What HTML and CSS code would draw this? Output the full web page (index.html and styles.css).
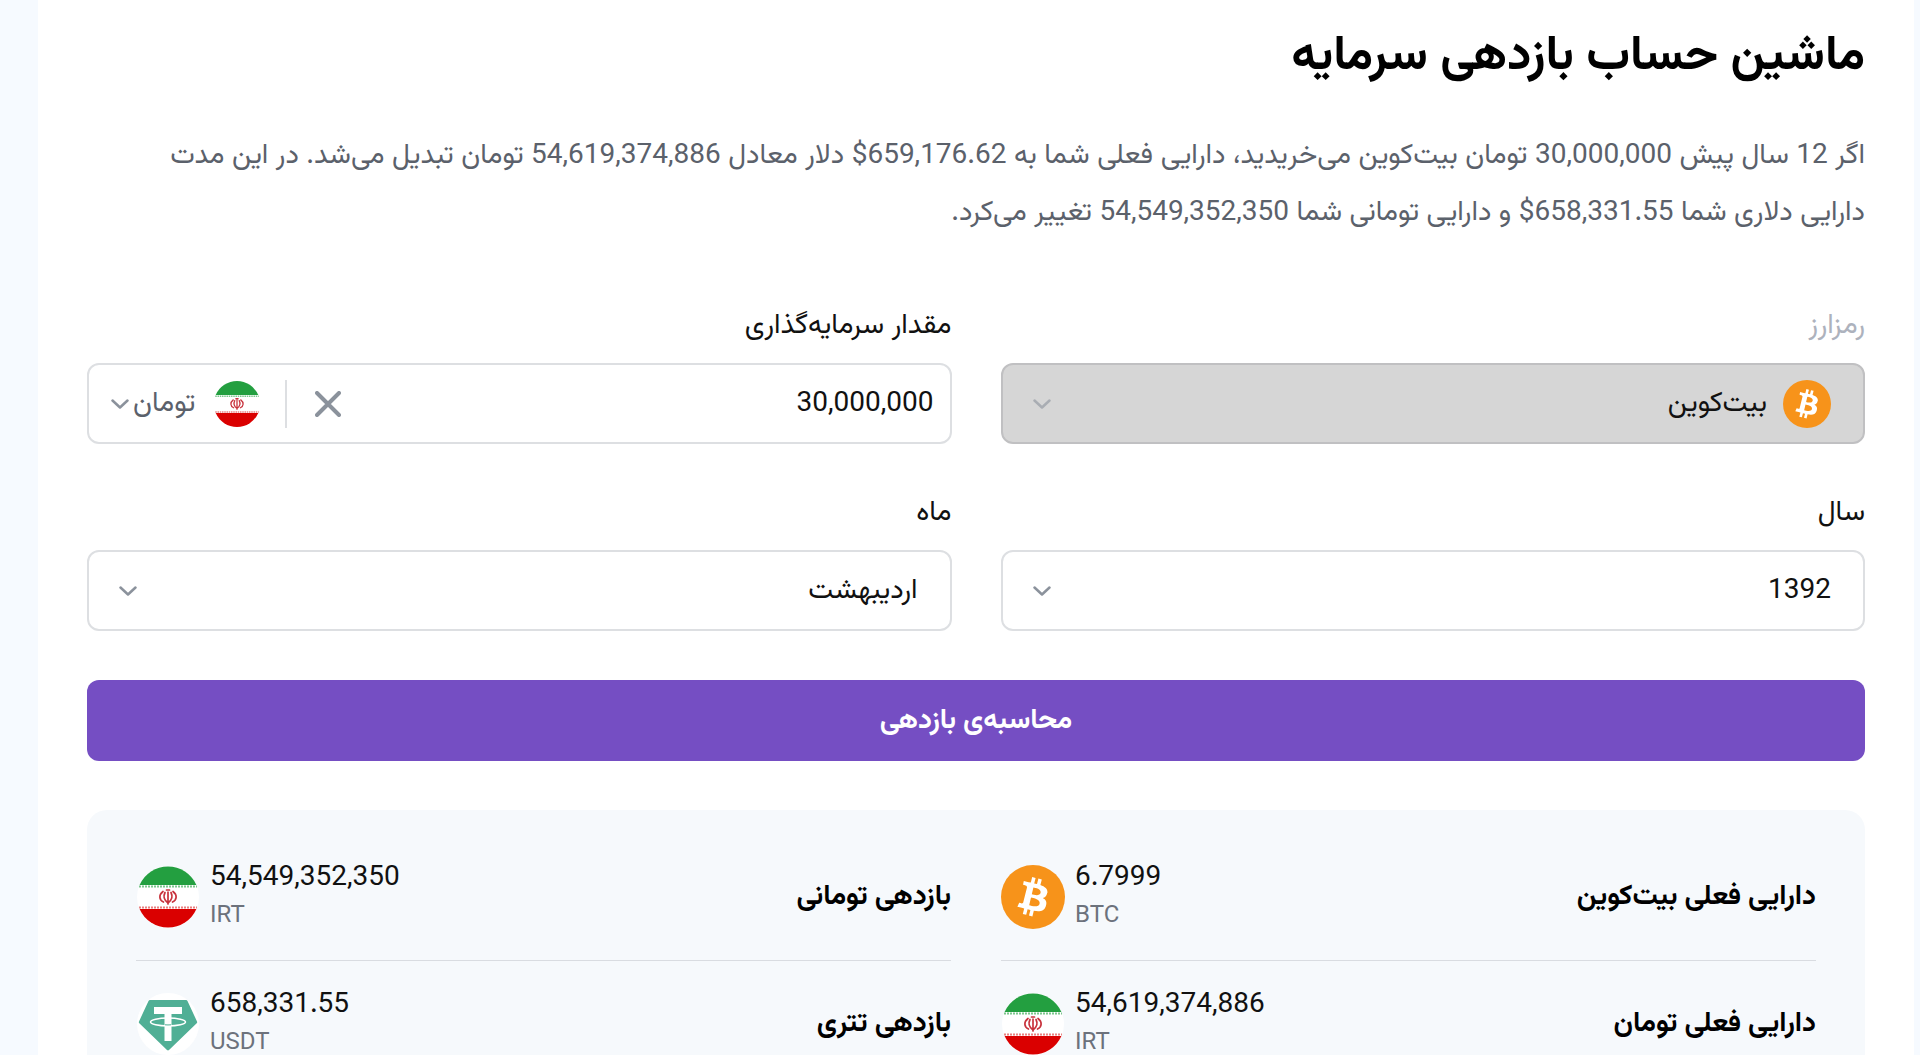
FILE: index.html
```html
<!DOCTYPE html>
<html lang="fa" dir="rtl">
<head>
<meta charset="utf-8">
<meta name="viewport" content="width=device-width, initial-scale=1">
<title>ماشین حساب بازدهی سرمایه</title>
<link rel="stylesheet" href="styles.css">
</head>
<body>
<svg class="sprite" aria-hidden="true">
  <symbol id="btc" viewBox="0 0 32 32">
    <circle cx="16" cy="16" r="16" fill="#f7931a"/>
    <path fill="#fff" d="M23.2 14c.3-2.100-1.300-3.200-3.500-4l.7-2.800-1.700-.4-.7 2.700-1.400-.3.7-2.700-1.700-.5-.7 2.800-1.100-.2-2.400-.6-.4 1.900s1.200.3 1.200.3c.7.2.8.6.8 1l-.8 3.200-1.100 4.400c-.1.200-.3.500-.8.400 0 0-1.200-.3-1.200-.3l-.9 2 2.200.5 1.200.3-.7 2.800 1.700.4.7-2.800 1.400.4-.7 2.700 1.700.5.7-2.800c2.900.5 5.100.3 6-2.300.8-2.100 0-3.300-1.500-4.100 1.100-.3 1.900-1 2.200-2.500zm-3.900 5.400c-.5 2.100-4.100 1-5.200.7l.9-3.800c1.200.3 4.900.9 4.300 3.100zm.5-5.500c-.5 1.900-3.400 1-4.400.7l.8-3.400c1 .2 4.100.7 3.600 2.700z"/>
  </symbol>
  <symbol id="iran" viewBox="0 0 64 64">
    <circle cx="32" cy="32" r="31" fill="#fff"/>
    <path fill="#239f40" d="M3.600 20a31 31 0 0 1 56.800 0z"/>
    <path fill="#da0000" d="M3.600 44a31 31 0 0 0 56.800 0z"/>
    <path stroke="#7cc68d" stroke-width="2" stroke-dasharray="2 1" d="M3 21.500h58"/>
    <path stroke="#e98080" stroke-width="2" stroke-dasharray="2 1" d="M3 42.500h58"/>
    <g fill="none" stroke="#c8323c" stroke-width="1.700" stroke-linecap="round">
      <path d="M32 27v12M30.500 25h3M27 26.500c-4.500 3.500-4 8.500.5 10.500M37 26.500c4.500 3.500 4 8.500-.5 10.500M29 27.500c-2 4-1 7.500 3 10.500M35 27.500c2 4 1 7.500-3 10.500"/>
    </g>
  </symbol>
  <symbol id="usdt" viewBox="0 0 64 64">
    <circle cx="32" cy="32" r="31" fill="#fff"/>
    <path fill="#50af95" d="M14 8h36q1 0 1.500 1L61 29.500q.5 1-.3 1.800L33 58q-1 .9-2 0L3.300 31.300q-.8-.8-.3-1.800L12.500 9q.5-1 1.500-1z"/>
    <path fill="#fff" d="M18 15h28v7H35.500v27h-7V22H18z"/>
    <ellipse cx="32" cy="30" rx="17.500" ry="4" fill="none" stroke="#fff" stroke-width="1.500"/>
    <path d="M29 32.800q3 .3 6 0" fill="none" stroke="#50af95"/>
  </symbol>
  <symbol id="chevron" viewBox="0 0 18 10">
    <path d="M1.500 1.500l7.500 7 7.500-7" fill="none" stroke="currentColor" stroke-width="2.500" stroke-linecap="round" stroke-linejoin="round"/>
  </symbol>
</svg>

<main class="card">
  <h1 class="title">ماشین حساب بازدهی سرمایه</h1>
  <p class="summary">اگر 12 سال پیش 30,000,000 تومان بیت‌کوین می‌خریدید، دارایی فعلی شما به 659,176.62$ دلار معادل 54,619,374,886 تومان تبدیل می‌شد. در این مدت دارایی دلاری شما 658,331.55$ و دارایی تومانی شما 54,549,352,350 تغییر می‌کرد.</p>

  <form class="form">
    <div class="field">
      <label class="label label-disabled" for="coin">رمزارز</label>
      <div class="control control-disabled">
        <svg class="coin"><use href="#btc"/></svg>
        <select class="select" id="coin" disabled><option>بیت‌کوین</option></select>
        <svg class="chevron"><use href="#chevron"/></svg>
      </div>
    </div>
    <div class="field">
      <label class="label" for="amount">مقدار سرمایه‌گذاری</label>
      <div class="control control-amount">
        <input class="amount" id="amount" type="text" inputmode="numeric" value="30,000,000">
        <button class="clear" type="button" aria-label="پاک کردن">
          <svg class="cross" viewBox="0 0 26 26"><path d="M2 2l22 22M24 2L2 24" fill="none" stroke="currentColor" stroke-width="4" stroke-linecap="round"/></svg>
        </button>
        <button class="unit" type="button">
          <svg class="coin"><use href="#iran"/></svg>
          <span class="unit-name">تومان</span>
          <svg class="chevron"><use href="#chevron"/></svg>
        </button>
      </div>
    </div>
    <div class="field">
      <label class="label" for="year">سال</label>
      <div class="control">
        <select class="select" id="year"><option>1392</option></select>
        <svg class="chevron"><use href="#chevron"/></svg>
      </div>
    </div>
    <div class="field">
      <label class="label" for="month">ماه</label>
      <div class="control">
        <select class="select" id="month"><option>اردیبهشت</option></select>
        <svg class="chevron"><use href="#chevron"/></svg>
      </div>
    </div>
    <button class="submit" type="button">محاسبه‌ی بازدهی</button>
  </form>

  <dl class="results">
    <div class="result">
      <dt class="result-name">دارایی فعلی بیت‌کوین</dt>
      <dd class="result-value">
        <svg class="result-icon"><use href="#btc"/></svg>
        <span class="figures"><span class="number">6.7999</span><span class="symbol">BTC</span></span>
      </dd>
    </div>
    <div class="result">
      <dt class="result-name">بازدهی تومانی</dt>
      <dd class="result-value">
        <svg class="result-icon"><use href="#iran"/></svg>
        <span class="figures"><span class="number">54,549,352,350</span><span class="symbol">IRT</span></span>
      </dd>
    </div>
    <div class="result">
      <dt class="result-name">دارایی فعلی تومان</dt>
      <dd class="result-value">
        <svg class="result-icon"><use href="#iran"/></svg>
        <span class="figures"><span class="number">54,619,374,886</span><span class="symbol">IRT</span></span>
      </dd>
    </div>
    <div class="result">
      <dt class="result-name">بازدهی تتری</dt>
      <dd class="result-value">
        <svg class="result-icon"><use href="#usdt"/></svg>
        <span class="figures"><span class="number">658,331.55</span><span class="symbol">USDT</span></span>
      </dd>
    </div>
  </dl>
</main>
</body>
</html>
```

FILE: styles.css
```css
* {
  box-sizing: border-box;
}

body {
  margin: 0;
  padding: 0 6px 0 38px;
  background: #f6faff;
  color: #111;
  font-family: Vazirmatn, Roboto, "Noto Sans Arabic", "DejaVu Sans", sans-serif;
  font-size: 28px;
  scrollbar-width: none;
}

button,
input,
select {
  margin: 0;
  padding: 0;
  border: 0;
  background: transparent;
  color: inherit;
  font: inherit;
}

.sprite {
  position: absolute;
  width: 0;
  height: 0;
}

.card {
  padding: 22px 49px 48px;
  background: #fff;
}

.title {
  margin: 0;
  color: #000;
  font-size: 49px;
  font-weight: 700;
  line-height: 70px;
}

.summary {
  margin: 36px 0 64px;
  padding-left: 48px;
  color: #5b616b;
  line-height: 57px;
}

.form {
  display: grid;
  grid-template-columns: 1fr 1fr;
  gap: 49px;
}

.field {
  display: flex;
  flex-direction: column;
  gap: 17px;
}

.label {
  line-height: 40px;
}

.label-disabled {
  color: #adb2bd;
}

.control {
  position: relative;
  display: flex;
  align-items: center;
  gap: 16px;
  height: 81px;
  padding: 0 32px;
  border: 2px solid #dddfe2;
  border-radius: 12px;
}

.control-disabled {
  border-color: #c0c0c2;
  background: #d6d6d6;
}

.control-amount {
  padding: 0 16px 0 24px;
}

.coin {
  flex: none;
  width: 48px;
  height: 48px;
}

.select {
  flex: 1;
  min-width: 0;
  height: 100%;
  appearance: none;
  opacity: 1;
}

.chevron {
  flex: none;
  width: 18px;
  height: 10px;
  margin-left: -2px;
  color: #8b929c;
}

.control > .chevron {
  position: absolute;
  left: 30px;
  margin: 0;
  pointer-events: none;
}

.control-disabled > .chevron {
  color: #a9adb3;
}

.amount {
  flex: 1;
  min-width: 0;
  height: 100%;
  outline: 0;
}

.clear {
  display: flex;
  padding: 11px 0 11px 28px;
  color: #8b929c;
}

.cross {
  width: 26px;
  height: 26px;
}

.unit {
  display: flex;
  align-items: center;
  gap: 4px;
  padding-right: 24px;
  border-right: 2px solid #dddfe2;
  color: #5b616b;
}

.clear + .unit {
  margin-right: -16px;
}

.unit-name {
  margin-right: 14px;
}

.submit {
  grid-column: 1 / -1;
  height: 81px;
  border-radius: 12px;
  background: #754ec3;
  color: #fff;
  font-weight: 700;
}

.results {
  display: grid;
  grid-template-columns: 1fr 1fr;
  column-gap: 50px;
  margin: 49px 0 0;
  padding: 24px 49px;
  border-radius: 20px;
  background: #f6f9fc;
}

.result {
  display: flex;
  align-items: center;
  justify-content: space-between;
  padding: 25px 0;
  border-bottom: 1px solid #d9dce1;
}

.result-name {
  color: #000;
  font-weight: 700;
}

.result-value {
  display: flex;
  align-items: center;
  gap: 10px;
  margin: 0;
  direction: ltr;
}

.result-icon {
  width: 64px;
  height: 64px;
}

.figures {
  display: flex;
  flex-direction: column;
  line-height: 38px;
}

.symbol {
  color: #6c727c;
  font-size: 24px;
}
```
